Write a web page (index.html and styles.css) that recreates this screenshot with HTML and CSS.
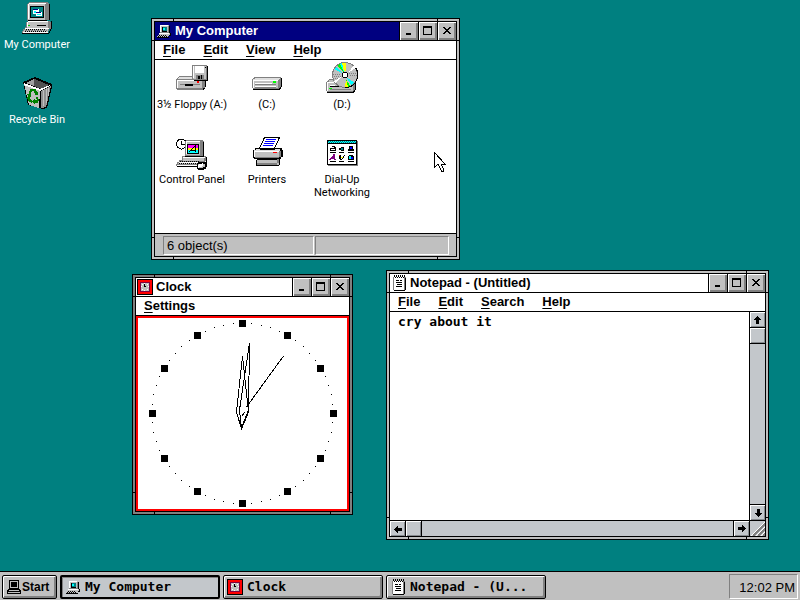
FILE: index.html
```html
<!DOCTYPE html>
<html lang="en">
<head>
<meta charset="utf-8">
<title>Desktop</title>
<link rel="stylesheet" href="styles.css">
</head>
<body>
<svg class="sprites" aria-hidden="true">
  <symbol id="pc16" viewBox="0 0 16 16">
    <path fill="#000" d="M5 3h9v7h1v3h-2v2H1v-1h12z"/>
    <path fill="#c0c0c0" d="M4 2h9v8H4zM3 10h11v2H3zM2 12h11v1H2zM1 13h11v1H1z"/>
    <path fill="#fff" d="M4 2h8v1H5v6H4zM3 10h10v1H3z"/>
    <path fill="#808080" d="M12 3h1v7h-1zM4 9h8v1H4z"/>
    <path fill="#000" d="M6 4h5v5H6z"/>
    <path fill="#008080" d="M7 4h4v4H7z"/>
    <path fill="#0ff" d="M7 5h2v2H7z"/>
    <path fill="#000" d="M3 12h1v1H3zM5 12h1v1H5zM7 12h1v1H7zM9 12h1v1H9zM2 13h1v1H2zM4 13h1v1H4zM6 13h1v1H6zM8 13h1v1H8zM10 13h1v1h-1z"/>
  </symbol>
  <symbol id="clock16" viewBox="0 0 16 16">
    <path fill="#000" d="M0 0h16v16H0z"/>
    <path fill="#f00" d="M1 1h14v14H1z"/>
    <path fill="#800040" d="M3 3h10v10H3z"/>
    <path fill="#c0c0c0" d="M4 4h8v8H4z"/>
    <path fill="#fff" d="M7 4h1v1H7zM4 7h1v1H4zM11 7h1v1h-1zM7 11h1v1H7zM5 5h1v1H5zM10 5h1v1h-1zM5 10h1v1H5zM10 10h1v1h-1z"/>
    <path fill="#000" d="M7 5h1v2h1v1H7z"/>
  </symbol>
  <symbol id="note16" viewBox="0 0 16 16">
    <path fill="#808080" d="M2 2h13v13h-1v1H3v-1H2z"/>
    <path fill="#fff" d="M3 2h10v13H3z"/>
    <path fill="#000" d="M3 0h1v2H3zM5 0h1v2H5zM7 0h1v2H7zM9 0h1v2H9zM11 0h1v2h-1zM13 0h1v2h-1zM4 2h1v1H4zM6 2h1v1H6zM8 2h1v1H8zM10 2h1v1h-1zM12 2h1v1h-1zM5 5h3v1H5zM9 5h2v1H9zM5 7h6v1H5zM6 9h5v1H6zM5 11h6v1H5zM14 3h1v12h-1zM3 15h11v1H3z"/>
  </symbol>
  <symbol id="max" viewBox="0 0 10 10"><path d="M0 0h9v9H0zM1 2v6h7V2z" fill-rule="evenodd"/></symbol>
  <symbol id="min" viewBox="0 0 10 10"><path d="M2 7h5v2H2z"/></symbol>
  <symbol id="close" viewBox="0 0 10 10"><path d="M1 1h2v1h1v1h2V2h1V1h2v1H8v1H7v1H6v1h1v1h1v1h1v1H7V7H6V6H4v1H3v1H1V7h1V6h1V5h1V4H3V3H2V2H1z"/></symbol>
  <symbol id="arrow" viewBox="0 0 8 8"><path d="M3 0h1v1h1v1h1v1h1v1H5v4H2V4H0V3h1V2h1V1h1z"/></symbol>
</svg>

<main class="desktop">
  <div class="shortcuts icon-grid">
    <a class="item" href="#computer">
      <svg viewBox="0 0 32 32">
        <path fill="#808080" d="M8 0h19v1h1v17h-2v1h3v8h-1v2h-1v2H1v-2h1v-2h2v-2h1v-5h2v-1H6V2h1V1h1z"/>
        <path fill="#c0c0c0" d="M7 2h17v16H7zM6 20h21v6H6zM4 27h23v3H2v-1h1v-1h1z"/>
        <path fill="#fff" d="M8 1h17v1H8zM7 2h1v15H7zM7 19h20v1H7zM6 20h1v5H6z"/>
        <path fill="#000" d="M28 2h1v16h-1zM7 18h19v1H7zM30 19h1v8h-1zM29 27h1v2h-1zM28 29h1v2h-1zM1 31h27v1H1z"/>
        <path fill="#808080" d="M24 3h3v15h-3zM27 20h3v7h-3z"/>
        <path fill="#000" d="M9 4h14v12H9z"/>
        <path fill="#008080" d="M10 5h12v10H10z"/>
        <path fill="#fff" d="M12 7h6v5h-6zM15 10h6v4h-6z"/>
        <path fill="#000080" d="M12 7h5v1h-5zM15 10h5v1h-5z"/>
        <path fill="#0ff" d="M13 9h2v2h-2zM16 12h4v1h-4z"/>
        <path fill="#0c0" d="M7 23h2v1H7z"/><path fill="#000" d="M16 23h9v1h-9z"/>
        <path fill="#fff" d="M4 26h24v1H4zM2 30h25v1H2z"/>
        <path stroke="#000" stroke-dasharray="1 1" d="M5 27.500h20M4 29.500h22"/>
        <path stroke="#808080" stroke-dasharray="2 1" d="M4 28.500h22"/>
      </svg>
      <span>My Computer</span>
    </a>
    <a class="item" href="#recycle">
      <svg viewBox="0 0 32 32">
        <path fill="#000" d="M2 5L14 0l17 7v3l-5 21-4 1-15-4z"/>
        <path fill="#505050" d="M5 6l9-4 14 6-8 4z"/>
        <path fill="#a0a0a0" d="M5 6l8-4v7z"/>
        <path fill="#c0c0c0" d="M3 7l16 6-1 18-10-3z"/>
        <path fill="#909090" d="M20 14l10-5-5 21-5 1z"/>
        <path fill="#c0c0c0" d="M22 13h1v16h-1zM25 12h1v14h-1zM27 11h1v8h-1z"/>
        <path fill="#fff" d="M3 6l16 6 10-4v1l-10 5L3 8z"/>
        <path fill="#008000" d="M9 12h6l1 3 1-1v4h-4l1-1-1-3h-2l-1 3H8zM6 17h4l1 3-1-1-1 3 2 1v3l-3-1-2-4 1-2zM16 19l2 4-1 3h-3v2l-3-3 3-4v2h2l-1-3z"/>
      </svg>
      <span>Recycle Bin</span>
    </a>
  </div>

  <section class="window active computer" id="computer">
    <div class="frame">
      <header class="title">
        <svg class="i16"><use href="#pc16"/></svg><h2>My Computer</h2>
        <button aria-label="Minimize"><svg><use href="#min"/></svg></button>
        <button aria-label="Maximize"><svg><use href="#max"/></svg></button>
        <button aria-label="Close"><svg><use href="#close"/></svg></button>
      </header>
      <nav class="menu"><button><u>F</u>ile</button><button><u>E</u>dit</button><button><u>V</u>iew</button><button><u>H</u>elp</button></nav>
      <div class="icon-grid files">
        <a class="item" href="#a">
          <svg viewBox="0 0 32 32">
            <path fill="#000" d="M2 15h28v10h-1v2h-1v1H1v-1h27z"/>
            <path fill="#808080" d="M0 17h1v-1h1v-1h1v-1h26v12h-2v2H1v-1H0z"/>
            <path fill="#dfdfdf" d="M3 15h25v1h-1v1H2v-1h1zM1 18h25v1H1z"/>
            <path fill="#c0c0c0" d="M1 19h25v7H1z"/>
            <path fill="#fff" d="M1 18h25v1H2v7H1z"/>
            <path fill="#808080" d="M4 22h20v1H4z"/><path fill="#000" d="M9 22h8v2H9z"/>
            <path fill="#000" d="M17 4h15v15H18v-1h-1z"/>
            <path fill="#808080" d="M16 3h15v15H17v-1h-1z"/>
            <path fill="#c0c0c0" d="M17 4h13v13H17z"/><path fill="#fff" d="M19 4h9v7h-9zM17 4h1v12h-1z"/>
            <path fill="#808080" d="M20 13h8v5h-8z"/><path fill="#000" d="M22 14h2v3h-2zM25 13h1v4h-1zM29 5h1v1h-1z"/>
            <path fill="#f00" d="M21 19h2v2h-2z"/>
          </svg><span>3½ Floppy (A:)</span>
        </a>
        <a class="item" href="#c">
          <svg viewBox="0 0 32 32">
            <path fill="#000" d="M4 16h27v9h-1v2h-1v1H2v-1h27z"/>
            <path fill="#808080" d="M1 17h1v-1h1v-1h27v10h-1v1h-1v1H2v-1H1z"/>
            <path fill="#dfdfdf" d="M4 16h25v1h-1v1H2v-1h2z"/>
            <path fill="#c0c0c0" d="M2 18h25v8H2z"/><path fill="#fff" d="M2 18h25v1H3v7H2zM4 21h17v1H4zM4 24h21v1H4z"/>
            <path fill="#808080" d="M4 22h21v1H4zM4 25h21v1H4z"/><path fill="#0f0" d="M22 19h3v2h-3z"/>
          </svg><span>(C:)</span>
        </a>
        <a class="item" href="#d">
          <svg viewBox="0 0 32 32">
            <path fill="#000" d="M4 19h26v9h-1v2h-1v1H1v-1h26V19z"/>
            <path fill="#808080" d="M0 20h1v-1h1v-1h1v-1h26v11h-1v1h-1v1H1v-1H0z"/>
            <path fill="#c0c0c0" d="M1 21h26v8H1zM3 18h6v3H3z"/>
            <path fill="#fff" d="M1 20h9v1H2v8H1zM4 23h5v1H4z"/><path fill="#808080" d="M4 27h21v1H4z"/>
            <path fill="#000" d="M4 24h13v1H4z"/><path fill="#0f0" d="M3 26h3v1H3z"/>
            <circle cx="19" cy="13" r="12.500" fill="#c0c0c0" stroke="#808080"/>
            <path fill="none" stroke="#000" d="M28 4a12.500 12.500 0 0 1-9 21.500"/>
            <path fill="#ff0" d="M16 1h4v8h-2zM20 17l-1 8h3z"/><path fill="#0f0" d="M11 4l3-2 4 8h-1zM20 17l2 8 2-1z"/>
            <path fill="#0ff" d="M14 2l2-1 2 9zM8 7l2-2 6 6zM21 16l4 7 3-3z"/>
            <path fill="#fff" d="M23 10l5-7 2 3zM15 15l-6 6-1-2z"/>
            <path stroke="#808080" stroke-dasharray="1 1" d="M7 12.500h8M8 14.500h7M7 16.500h6M23 11.500h8M24 13.500h7"/>
            <path fill="#000" d="M17 10h4v1h1v4h-1v1h-4v-1h-1v-4h1z"/><path fill="#fff" d="M17 11h4v4h-4z"/>
          </svg><span>(D:)</span>
        </a>
        <a class="item" href="#cp">
          <svg viewBox="0 0 32 32">
            <circle cx="5.500" cy="7" r="5" fill="#fff" stroke="#000"/>
            <path fill="#000" d="M5 4h1v3h3v1H5z"/>
            <path fill="#808080" d="M10 3h17v1h1v14h-1v1h3v5h-1v3h-5v2H0v-2h1v-2h2v-2h3v-4h3V4h1z"/>
            <path fill="#000" d="M27 5h1v14h-1zM30 20h1v6h-1zM1 29h22v1H1zM9 19h19v1H9z"/>
            <path fill="#c0c0c0" d="M10 5h14v13H10zM7 20h21v4H7zM2 26h21v1H2z"/>
            <path fill="#fff" d="M10 4h14v1H11v12h-1zM7 20h22v1H7z"/>
            <path fill="#000" d="M11 7h12v10H11z"/><path fill="#f0f" d="M12 8h10v3H12z"/><path fill="#ff0" d="M12 11h10v2H12z"/><path fill="#0ff" d="M12 13h10v3H12z"/>
            <path fill="none" stroke="#000" d="M13 15l6-6v6M15 13.500h4"/>
            <path stroke="#000" stroke-dasharray="1 1" d="M4 24.500h19M3 26.500h20"/><path stroke="#fff" d="M3 25.500h20M1 28.500h21"/>
            <path fill="#000" d="M22 25h8v1h1v4h-1v2h-2v1h-6v-1h-1v-5h1z"/><path fill="#c0c0c0" d="M22 27h7v3h-2v1h-5z"/><path fill="#fff" d="M22 28l5-2v3l-5 2z"/>
          </svg><span>Control Panel</span>
        </a>
        <a class="item" href="#printers">
          <svg viewBox="0 0 32 32">
            <path fill="#fff" stroke="#000" d="M13.500 .5h15l-5 11h-15z"/>
            <path stroke="#00f" d="M15 2.500h10M14 4.500h10M13 6.500h10M12 8.500h10"/>
            <path fill="#000" d="M4 11h6v1h13v-1h8v2h1v7h-2v2h-1v6h-1v1H5v-6h1v-1H3v-1H2v-8h2z"/>
            <path fill="#c0c0c0" d="M3 14h26v6H3zM6 23h22v5H6z"/>
            <path fill="#dfdfdf" d="M5 12h4v1h15v-1h5v2H3v-1h2z"/><path fill="#fff" d="M3 14h25v1H4v5H3z"/>
            <path fill="#808080" d="M28 14h2v6h-2zM4 20h24v1H4zM6 26h20v2H6zM26 22h2v4h-2z"/>
            <path fill="#f00" d="M22 15h4v1h-4z"/>
          </svg><span>Printers</span>
        </a>
        <a class="item" href="#dialup">
          <svg viewBox="0 0 32 32">
            <path fill="#808080" d="M2 4h30v25H2z"/><path fill="#000" d="M1 3h30v25H1z"/><path fill="#fff" d="M2 7h28v20H2z"/>
            <path fill="#0ff" d="M2 4h28v2H2z"/><path stroke="#008080" stroke-dasharray="1 1" d="M2 4.500h28M3 5.500h27"/>
            <path fill="#000" d="M4 15h6v1H4zM13 15h5v1h-5zM22 15h6v1h-6zM4 24h6v1H4zM13 24h5v1h-5zM22 24h6v1h-6zM4 11h2V9h3v1h1v4H4zM13 11h2v-1h3v4h-3v-1h-2zM23 9h4v3h1v2h-6v-2h1zM13 18h2v3h-2zM23 18h4v1h1v4h-6v-4h1z"/>
            <path fill="#fff" d="M6 10h2v1H6zM5 12h4v1H5z"/><path fill="#008080" d="M15 11h2v2h-2z"/><path fill="#00f" d="M24 10h2v2h-2z"/>
            <path fill="none" stroke="#800080" stroke-width="1.500" d="M4 23l4-5 1 5M5 21h4"/>
            <path fill="none" stroke="#000" d="M13 20l2 3 4-5"/><path fill="#ff0" d="M15 20h2v1h-2z"/><path fill="#f00" d="M13 18h1v1h-1z"/>
            <path fill="#0ff" d="M23 19h2v3h-2z"/><path fill="#00f" d="M25 20h2v2h-2z"/>
          </svg><span>Dial-Up Networking</span>
        </a>
      </div>
      <footer class="status"><span>6 object(s)</span><span></span></footer>
    </div>
  </section>

  <section class="window clock" id="clock">
    <div class="frame">
      <header class="title">
        <svg class="i16"><use href="#clock16"/></svg><h2>Clock</h2>
        <button aria-label="Minimize"><svg><use href="#min"/></svg></button>
        <button aria-label="Maximize"><svg><use href="#max"/></svg></button>
        <button aria-label="Close"><svg><use href="#close"/></svg></button>
      </header>
      <nav class="menu"><button><u>S</u>ettings</button></nav>
      <div class="face">
        <svg viewBox="0 0 209 191" role="img" aria-label="12:02">
          <g id="dial"></g>
          <path class="hand" d="M104.500 38l-6 56 5 17 7-17zM111.500 25l-10 67 2 18 7-18zM145.500 38l-37 51M104 98l3-4"/>
        </svg>
      </div>
    </div>
  </section>

  <section class="window notepad" id="notepad">
    <div class="frame">
      <header class="title">
        <svg class="i16"><use href="#note16"/></svg><h2>Notepad - (Untitled)</h2>
        <button aria-label="Minimize"><svg><use href="#min"/></svg></button>
        <button aria-label="Maximize"><svg><use href="#max"/></svg></button>
        <button aria-label="Close"><svg><use href="#close"/></svg></button>
      </header>
      <nav class="menu"><button><u>F</u>ile</button><button><u>E</u>dit</button><button><u>S</u>earch</button><button><u>H</u>elp</button></nav>
      <div class="editor">
        <textarea aria-label="Text" spellcheck="false">cry about it</textarea>
        <div class="bar vertical">
          <button aria-label="Up"><svg><use href="#arrow"/></svg></button><span class="thumb"></span><span class="track"></span>
          <button aria-label="Down"><svg class="down"><use href="#arrow"/></svg></button>
        </div>
        <div class="bar horizontal">
          <button aria-label="Left"><svg class="left"><use href="#arrow"/></svg></button><span class="thumb"></span><span class="track"></span>
          <button aria-label="Right"><svg class="right"><use href="#arrow"/></svg></button>
        </div>
        <svg class="grip" viewBox="0 0 15 15"><path stroke="#fff" d="M1 15L15 1M6 15l9-9M11 15l4-4"/><path stroke="#808080" stroke-width="2" d="M3 15L15 3M8 15l7-7M13 15l2-2"/></svg>
      </div>
    </div>
  </section>

  <svg class="pointer" viewBox="0 0 12 20"><path fill="#fff" stroke="#000" d="M.5 .5v15l3-3h1l3 6.500h2v-2l-2.500-5h4z"/></svg>
</main>

<footer class="taskbar">
  <button class="start">
    <svg class="i16" viewBox="0 0 16 16"><path d="M3 1h10v9h1v1h1v4H1v-4h1v-1h1zM4 2v7h8V2zM3 11v1h10v-1zM2 13v1h12v-1z" fill-rule="evenodd"/><path d="M5 3h6v5H5z"/></svg>Start
  </button>
  <button class="task pressed"><svg class="i16"><use href="#pc16"/></svg>My Computer</button>
  <button class="task"><svg class="i16"><use href="#clock16"/></svg>Clock</button>
  <button class="task"><svg class="i16"><use href="#note16"/></svg>Notepad - (U...</button>
  <time class="tray">12:02 PM</time>
</footer>
<script src="clock.js"></script>
</body>
</html>
```
FILE: styles.css
```css
* { box-sizing: border-box; }

body {
  margin: 0;
  height: 100vh;
  display: flex;
  flex-direction: column;
  overflow: hidden;
  background: #008080;
  color: #000;
  font: 13px/16px "Liberation Sans", Arial, sans-serif;
}

button {
  margin: 0;
  padding: 0;
  border: 0;
  background: none;
  color: inherit;
  font: inherit;
}

svg {
  display: block;
  flex: none;
  shape-rendering: crispEdges;
}

.sprites { position: absolute; width: 0; height: 0; }
.i16 { width: 16px; height: 16px; }

.desktop { position: relative; flex: 1; min-height: 0; }

/* Icon views */
.icon-grid {
  display: grid;
  grid-template-columns: repeat(auto-fill, 75px);
  grid-auto-rows: 75px;
  align-content: start;
}
.shortcuts { width: 75px; color: #fff; }
.item {
  display: flex;
  flex-direction: column;
  align-items: center;
  gap: 4px;
  padding: 2px 1px 0 0;
  color: inherit;
  text-align: center;
  text-decoration: none;
  font: 11px/13px Roboto, "Liberation Sans", sans-serif;
}
.item svg { width: 32px; height: 32px; overflow: visible; }

/* Windows */
.window {
  --frame: #c0c0c0;
  position: absolute;
  padding: 2px;
  border: 1px solid #000;
  background:
    linear-gradient(#000, #000) left 21px top / 1px 100% no-repeat,
    linear-gradient(#000, #000) right 21px top / 1px 100% no-repeat,
    linear-gradient(#000, #000) left top 21px / 100% 1px no-repeat,
    linear-gradient(#000, #000) left bottom 21px / 100% 1px no-repeat,
    var(--frame);
}
.computer { left: 151px; top: 18px; width: 309px; height: 242px; }
.clock { --frame: #808080; left: 132px; top: 274px; width: 221px; height: 241px; }
.notepad { left: 386px; top: 270px; width: 383px; height: 270px; }

.frame {
  display: flex;
  flex-direction: column;
  height: 100%;
  border: 1px solid #000;
  background: #fff;
}
.title {
  display: flex;
  align-items: center;
  flex: none;
  height: 19px;
  padding-left: 1px;
  border-bottom: 1px solid #000;
}
.active .title { background: #000080; color: #fff; }
.title h2 {
  flex: 1;
  margin: 0 0 0 3px;
  font-size: 13px;
  line-height: 18px;
}
.title button {
  display: grid;
  place-items: center;
  width: 19px;
  height: 18px;
  border-left: 1px solid #000;
  background: #c0c0c0;
  box-shadow: inset 1px 1px #fff, inset -2px -2px #808080;
  color: #000;
}
.title button svg { width: 10px; height: 10px; }

.menu {
  display: flex;
  flex: none;
  gap: 18px;
  height: 19px;
  padding: 0 8px;
  border-bottom: 1px solid #000;
  font-weight: bold;
  line-height: 16px;
}
.menu u { text-underline-offset: 2px; }

.files { flex: 1; min-height: 0; padding-right: 20px; }

.status {
  display: grid;
  grid-template-columns: 151px 1fr;
  gap: 1px;
  padding: 2px 7px 1px 8px;
  border-top: 1px solid #000;
  background: #c0c0c0;
}
.status span {
  height: 19px;
  padding-left: 3px;
  border: 1px solid;
  border-color: #808080 #fff #fff #808080;
  line-height: 18px;
}

.face { flex: 1; min-height: 0; border: 2px solid #f00; }
.face svg { width: 100%; height: 100%; }
.hand { fill: none; stroke: #000; }

/* Text editor */
.editor {
  display: grid;
  grid-template: 1fr 16px / 1fr 16px;
  flex: 1;
  min-height: 0;
}
textarea {
  width: 100%;
  height: 100%;
  padding: 2px 8px;
  border: 0;
  outline: 0;
  resize: none;
  overflow: hidden;
  background: #fff;
  color: #000;
  font: bold 13px/16px "DejaVu Sans Mono", monospace;
}
.bar { display: flex; background: #c3c7cb; }
.vertical { flex-direction: column; border-left: 1px solid #000; }
.horizontal { border-top: 1px solid #000; }
.bar button, .thumb {
  display: grid;
  place-items: center;
  flex: none;
  width: 15px;
  height: 15px;
  background: #c3c7cb;
  box-shadow: inset 1px 1px #fff, inset -1px -1px #868a8e;
}
.track { flex: 1; }
.vertical .thumb, .vertical .track { border-top: 1px solid #000; }
.vertical .thumb { height: 16px; }
.vertical .track { border-bottom: 1px solid #000; }
.horizontal .thumb, .horizontal .track { border-left: 1px solid #000; }
.horizontal .thumb { width: 16px; }
.horizontal .track { border-right: 1px solid #000; }
.bar svg { width: 8px; height: 8px; }
.down { transform: rotate(180deg); }
.left { transform: rotate(-90deg); }
.right { transform: rotate(90deg); }
.grip {
  width: 16px;
  height: 16px;
  border: solid #000;
  border-width: 1px 0 0 1px;
  background: #c3c7cb;
}

.pointer { position: absolute; left: 434px; top: 152px; width: 12px; height: 20px; }

/* Taskbar */
.taskbar {
  display: flex;
  align-items: center;
  flex: none;
  gap: 3px;
  height: 29px;
  padding: 1px 2px 0;
  border-top: 1px solid #000;
  background: #c0c0c0;
}
.taskbar button {
  display: flex;
  align-items: center;
  height: 24px;
  padding-left: 3px;
  border: 1px solid #000;
  border-radius: 2px;
  box-shadow: inset 1px 1px #fff, inset -2px -2px #808080;
  white-space: nowrap;
}
.taskbar .start {
  width: 55px;
  font: bold 12px/16px "Liberation Sans", sans-serif;
}
.taskbar .task {
  flex: 0 1 160px;
  gap: 4px;
  overflow: hidden;
  font: bold 13px/16px "DejaVu Sans Mono", monospace;
}
.taskbar .pressed {
  border-width: 2px;
  background: #c3c7cb;
  box-shadow: inset 1px 1px #808080;
}
.tray {
  margin-left: auto;
  height: 25px;
  padding: 0 2px 0 9px;
  border: 1px solid;
  border-color: #808080 #fff #fff #808080;
  line-height: 25px;
}
```
FILE: clock.js
```javascript
// Sixty marks round the dial: a square for each hour, a dot for each minute.
const dial = document.getElementById("dial");
for (let i = 0; i < 60; i++) {
  const angle = (i * Math.PI) / 30;
  const size = i % 5 === 0 ? 7 : 1;
  const mark = document.createElementNS("http://www.w3.org/2000/svg", "rect");
  mark.setAttribute("x", Math.floor(104.5 + 90.5 * Math.sin(angle)) - (size - 1) / 2);
  mark.setAttribute("y", Math.round(95 - 90 * Math.cos(angle)) - (size - 1) / 2);
  mark.setAttribute("width", size);
  mark.setAttribute("height", size);
  dial.append(mark);
}
```
